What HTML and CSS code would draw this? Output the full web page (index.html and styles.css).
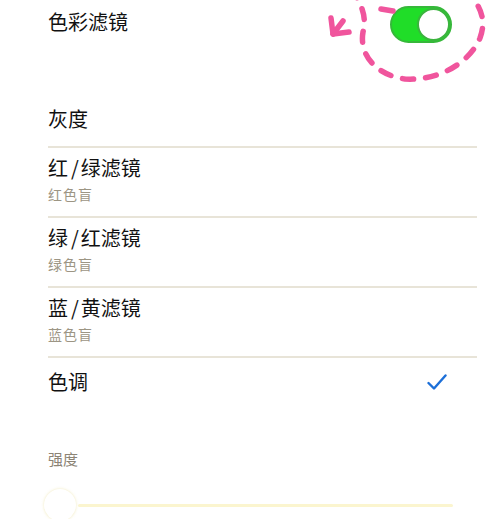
FILE: index.html
```html
<!DOCTYPE html>
<html lang="zh-CN">
<head>
    <meta charset="UTF-8">
    <title>色彩滤镜</title>
    <link rel="stylesheet" href="styles.css">
</head>
<body>
    <div class="page">
        <div class="header">
            <span class="title">色彩滤镜</span>
            <div class="toggle on"><div class="knob"></div></div>
        </div>

        <!-- hand drawn circle around the switch -->
        <svg class="scribble" width="500" height="90" viewBox="0 0 500 90">
            <g fill="none" stroke="#f0559d" stroke-width="5.5" stroke-linecap="round" stroke-linejoin="round">
                <path d="M352 -12 C358 0 368 14 363 32 C359 55 376 75 405 79 C440 81 470 62 480 38 C486 22 482 8 470 -5" stroke-dasharray="11 12"/>
                <path d="M393 11 L381 9"/>
                <path d="M343 21 L333 34"/>
                <path d="M331 18 L333 34 L349 32"/>
            </g>
        </svg>

        <ul class="list">
            <li class="row plain">
                <span class="title">灰度</span>
            </li>
            <li class="row">
                <span class="title">红<span class="slash">/</span>绿滤镜</span>
                <span class="sub">红色盲</span>
            </li>
            <li class="row">
                <span class="title">绿<span class="slash">/</span>红滤镜</span>
                <span class="sub">绿色盲</span>
            </li>
            <li class="row">
                <span class="title">蓝<span class="slash">/</span>黄滤镜</span>
                <span class="sub">蓝色盲</span>
            </li>
            <li class="row tint">
                <span class="title">色调</span>
                <svg class="check" width="20" height="17" viewBox="0 0 20 17">
                    <polyline points="1.5,9 7,14.5 18.5,1.5" fill="none" stroke="#1c6fd8" stroke-width="2.4" stroke-linecap="round" stroke-linejoin="round"/>
                </svg>
            </li>
        </ul>

        <div class="label">强度</div>
        <div class="slider">
            <div class="thumb"></div>
            <div class="track"></div>
        </div>
    </div>
</body>
</html>
```

FILE: styles.css
```css
body {
    margin: 0;
    background-color: #fff;
    font-family: "Noto Sans CJK SC", "Noto Sans", sans-serif;
    color: #111;
}
.page {
    position: relative;
    padding: 0 23px 0 48px;
    height: 519px;
    overflow: hidden;
}
.header {
    display: flex;
    justify-content: space-between;
    align-items: center;
    height: 47px;
}
.title {
    display: block;
    font-size: 20px;
    line-height: 28px;
}
.header .title {
    margin-top: -4px;
}
.slash {
    margin: 0 2px 0 3px;
}
.toggle {
    width: 62px;
    height: 37px;
    box-sizing: border-box;
    border-radius: 19px;
    background-color: #e0e0e0;
    border: 2px solid #cfcfcf;
    margin-right: 25px;
    margin-top: 1px;
    display: flex;
    justify-content: flex-start;
}
.toggle.on {
    background-color: #20dd28;
    border-color: #36b83a;
    justify-content: flex-end;
}
.toggle .knob {
    width: 33px;
    height: 33px;
    box-sizing: border-box;
    border-radius: 50%;
    background-color: #fff;
    border: 2px solid #3bb43e;
}
.scribble {
    position: absolute;
    left: 0;
    top: 0;
    pointer-events: none;
}
.list {
    list-style: none;
    margin: 58px 0 0;
    padding: 0;
}
.row {
    border-bottom: 2px solid #e8e4d8;
    padding: 6px 0 12px;
}
.row.plain {
    padding: 0 0 13px;
}
.row.tint {
    border-bottom: none;
    padding: 10px 30px 0 0;
    display: flex;
    justify-content: space-between;
    align-items: center;
}
.sub {
    display: block;
    margin-top: 2px;
    font-size: 14px;
    line-height: 20px;
    color: #9c9584;
    letter-spacing: 1px;
}
.check {
    display: block;
}
.label {
    margin-top: 53px;
    font-size: 15px;
    line-height: 20px;
    color: #8c8475;
}
.slider {
    display: flex;
    align-items: center;
    height: 32px;
    margin: 20px 24px 0 -4px;
}
.thumb {
    width: 32px;
    height: 32px;
    border-radius: 50%;
    background-color: #fff;
    box-shadow: 0 0 3px rgba(235, 225, 160, 0.7);
    flex-shrink: 0;
}
.track {
    flex: 1;
    height: 3px;
    margin-left: 2px;
    background-color: #fbf5cf;
    border-radius: 2px;
}
```
